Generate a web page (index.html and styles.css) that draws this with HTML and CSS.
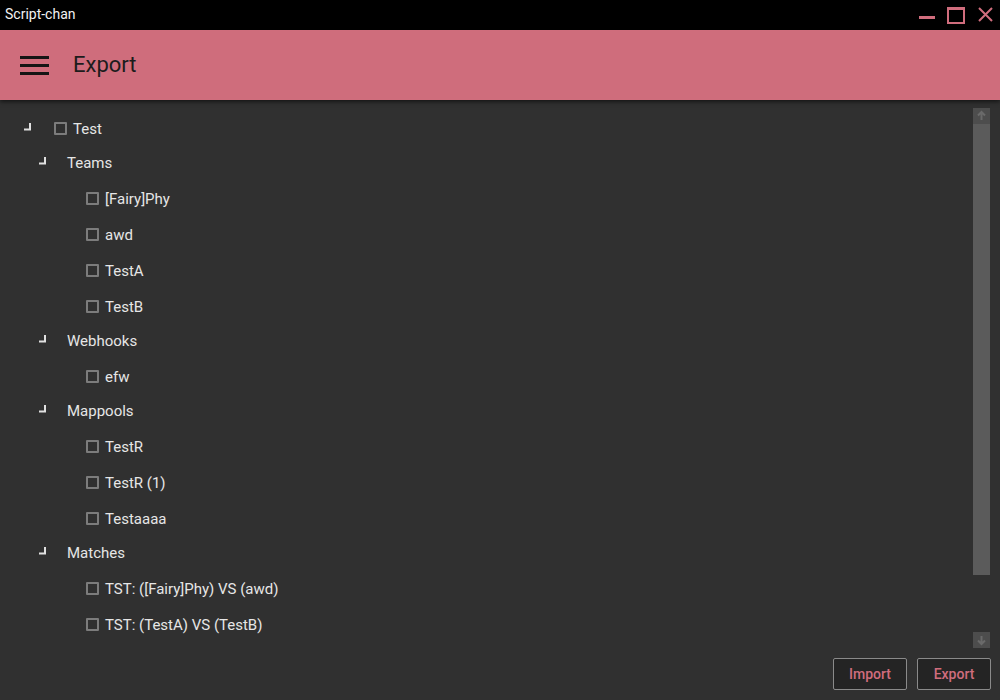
FILE: index.html
```html
<!DOCTYPE html>
<html>
<head>
<meta charset="utf-8">
<link rel="stylesheet" href="styles.css">
</head>
<body>
<div class="titlebar">
  <span class="app-name">Script-chan</span>
  <div class="win-btns">
    <svg class="wb" width="20" height="20" viewBox="0 0 20 20"><rect x="3" y="12" width="16" height="3" fill="#d06d7d"/></svg>
    <svg class="wb" width="20" height="20" viewBox="0 0 20 20"><path d="M3 4 H19 V19 H3 Z" fill="none" stroke="#d06d7d" stroke-width="2"/><rect x="3" y="3" width="16" height="3" fill="#d06d7d"/></svg>
    <svg class="wb" width="20" height="20" viewBox="0 0 20 20"><path d="M4 4 L17 17 M17 4 L4 17" stroke="#d06d7d" stroke-width="2"/></svg>
  </div>
</div>
<header class="appbar">
  <div class="hamburger"><span></span><span></span><span></span></div>
  <h1 class="title">Export</h1>
</header>
<main class="content">
  <div class="scroll-area">
    <div class="tree">
      <div class="row head lvl0">
        <svg class="exp" width="8" height="8" viewBox="0 0 8 8"><path d="M0 6.5 H6 V0" fill="none" stroke="#e0e0e0" stroke-width="2"/></svg>
        <span class="cb"></span><span class="lbl">Test</span>
      </div>
      <div class="row head lvl1">
        <svg class="exp" width="8" height="8" viewBox="0 0 8 8"><path d="M0 6.5 H6 V0" fill="none" stroke="#e0e0e0" stroke-width="2"/></svg>
        <span class="lbl">Teams</span>
      </div>
      <div class="row leaf"><span class="cb"></span><span class="lbl">[Fairy]Phy</span></div>
      <div class="row leaf"><span class="cb"></span><span class="lbl">awd</span></div>
      <div class="row leaf"><span class="cb"></span><span class="lbl">TestA</span></div>
      <div class="row leaf"><span class="cb"></span><span class="lbl">TestB</span></div>
      <div class="row head lvl1">
        <svg class="exp" width="8" height="8" viewBox="0 0 8 8"><path d="M0 6.5 H6 V0" fill="none" stroke="#e0e0e0" stroke-width="2"/></svg>
        <span class="lbl">Webhooks</span>
      </div>
      <div class="row leaf"><span class="cb"></span><span class="lbl">efw</span></div>
      <div class="row head lvl1">
        <svg class="exp" width="8" height="8" viewBox="0 0 8 8"><path d="M0 6.5 H6 V0" fill="none" stroke="#e0e0e0" stroke-width="2"/></svg>
        <span class="lbl">Mappools</span>
      </div>
      <div class="row leaf"><span class="cb"></span><span class="lbl">TestR</span></div>
      <div class="row leaf"><span class="cb"></span><span class="lbl">TestR (1)</span></div>
      <div class="row leaf"><span class="cb"></span><span class="lbl">Testaaaa</span></div>
      <div class="row head lvl1">
        <svg class="exp" width="8" height="8" viewBox="0 0 8 8"><path d="M0 6.5 H6 V0" fill="none" stroke="#e0e0e0" stroke-width="2"/></svg>
        <span class="lbl">Matches</span>
      </div>
      <div class="row leaf"><span class="cb"></span><span class="lbl">TST: ([Fairy]Phy) VS (awd)</span></div>
      <div class="row leaf"><span class="cb"></span><span class="lbl">TST: (TestA) VS (TestB)</span></div>
    </div>
    <div class="scrollbar">
      <div class="sb-btn">
        <svg width="17" height="16" viewBox="0 0 17 16"><path d="M8.5 4 V12 M5 7.5 L8.5 4 L12 7.5" fill="none" stroke="#6a6a6a" stroke-width="2"/></svg>
      </div>
      <div class="sb-thumb"></div>
      <div class="sb-track"></div>
      <div class="sb-btn">
        <svg width="17" height="16" viewBox="0 0 17 16"><path d="M8.5 4 V12 M5 8.5 L8.5 12 L12 8.5" fill="none" stroke="#6a6a6a" stroke-width="2"/></svg>
      </div>
    </div>
  </div>
  <div class="actions">
    <button class="btn">Import</button>
    <button class="btn">Export</button>
  </div>
</main>
</body>
</html>
```

FILE: styles.css
```css
* { box-sizing: border-box; }
html, body { margin: 0; padding: 0; }
body {
  width: 1000px;
  height: 700px;
  overflow: hidden;
  background: #303030;
  font-family: Roboto, "Liberation Sans", sans-serif;
  display: flex;
  flex-direction: column;
}
.titlebar {
  height: 30px;
  background: #000;
  display: flex;
  align-items: center;
  justify-content: space-between;
  padding-left: 5px;
  flex: none;
}
.app-name {
  color: #f2f2f2;
  font-size: 14px;
  position: relative;
  top: -1px;
}
.win-btns {
  display: flex;
  align-items: center;
  gap: 10px;
  padding-right: 5px;
  height: 30px;
}
.wb { display: block; margin-top: -2px; }
.wb:nth-child(2) { margin-left: -1px; }
.appbar {
  height: 70px;
  flex: none;
  background: #cf6d7c;
  display: flex;
  align-items: center;
  padding-left: 20px;
  box-shadow: 0 2px 4px rgba(0,0,0,0.55);
  position: relative;
  z-index: 1;
}
.hamburger {
  width: 29px;
  display: flex;
  flex-direction: column;
  gap: 5px;
  margin-top: 1px;
}
.hamburger span {
  display: block;
  height: 3px;
  background: #151515;
}
.title {
  margin: -1px 0 0 24px;
  font-size: 22px;
  font-weight: 400;
  color: #1c1c1c;
}
.content {
  flex: 1;
  display: flex;
  flex-direction: column;
  padding: 8px 10px 10px 10px;
  min-height: 0;
}
.scroll-area {
  height: 540px;
  display: flex;
}
.tree {
  flex: 1;
  padding-top: 5px;
}
.row {
  display: flex;
  align-items: center;
  color: #e6e6e6;
  font-size: 15px;
}
.row.head {
  height: 34px;
  padding-bottom: 2px;
}
.row.leaf {
  height: 36px;
  padding-left: 76px;
}
.row.lvl0 { padding-left: 14px; }
.row.lvl1 { padding-left: 29px; }
.exp { display: block; flex: none; margin-top: -4px; }
.lvl0 .exp { margin-right: 22px; }
.lvl1 .exp { margin-right: 20px; }
.cb {
  width: 13px;
  height: 13px;
  border: 2px solid #7c7c7c;
  border-radius: 1px;
  flex: none;
  margin-right: 6px;
  margin-top: -1px;
}
.lbl { line-height: 1; }
.scrollbar {
  width: 17px;
  flex: none;
  display: flex;
  flex-direction: column;
}
.sb-btn {
  height: 16px;
  background: #4d4d4d;
  flex: none;
}
.sb-btn svg { display: block; }
.sb-thumb {
  height: 451px;
  background: #5b5b5b;
  flex: none;
}
.sb-track { flex: 1; }
.actions {
  margin-top: 10px;
  display: flex;
  justify-content: flex-end;
  gap: 10px;
  margin-right: -1px;
}
.btn {
  width: 74px;
  height: 32px;
  background: #242424;
  border: 1px solid #8a8a8a;
  border-radius: 2px;
  color: #d06d7d;
  font-family: Roboto, "Liberation Sans", sans-serif;
  font-size: 14px;
  font-weight: 500;
  padding: 0;
}
```
